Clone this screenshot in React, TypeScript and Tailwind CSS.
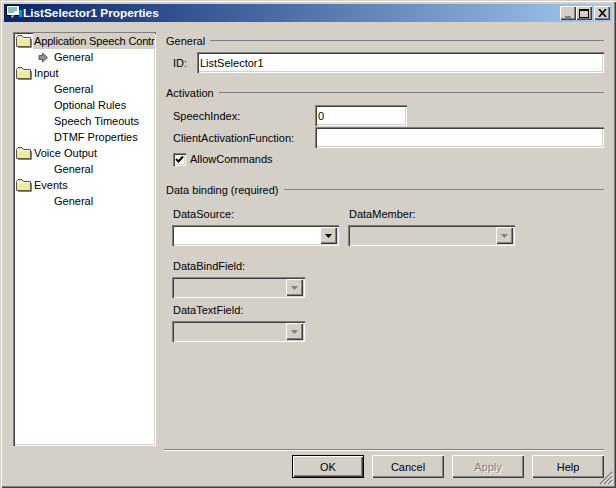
import React from 'react';

const sunken = 'shadow-[inset_1px_1px_0_#808080,inset_2px_2px_0_#404040,inset_-1px_-1px_0_#ffffff,inset_-2px_-2px_0_#d4d0c8]';
const raised = 'shadow-[inset_1px_1px_0_#ffffff,inset_-1px_-1px_0_#404040,inset_-2px_-2px_0_#808080]';

const treeItems = [
  { label: 'Application Speech Contr', folder: true, selected: true },
  { label: 'General', arrow: true },
  { label: 'Input', folder: true },
  { label: 'General' },
  { label: 'Optional Rules' },
  { label: 'Speech Timeouts' },
  { label: 'DTMF Properties' },
  { label: 'Voice Output', folder: true },
  { label: 'General' },
  { label: 'Events', folder: true },
  { label: 'General' },
];

const FolderIcon = () => (
  <svg width="17" height="14" viewBox="0 0 17 14" className="shrink-0">
    <path d="M0.5 12.5V3.5L2 1.5H6L7.5 3.5H14.5V12.5Z" fill="#f2ea8c" stroke="#555" />
    <path d="M1 4.5H14" stroke="#fff" />
    <path d="M15.5 5V13.5H2" fill="none" stroke="#808080" />
  </svg>
);

const ArrowIcon = () => (
  <svg width="10" height="11" viewBox="0 0 10 11" className="shrink-0">
    <path d="M4.5 1L9.5 5.5L4.5 10V7.5H1V3.5H4.5Z" fill="#909090" stroke="#404040" strokeWidth="0.8" />
  </svg>
);

const TitleIcon = () => (
  <svg width="16" height="16" viewBox="0 0 16 16" className="shrink-0">
    <rect x="0.5" y="0.5" width="13" height="10" fill="#fff" stroke="#000" />
    <path d="M2 3H11M2 5H11M2 7H8" stroke="#008080" />
    <path d="M5 10.5V14.5L9 10.5" fill="#fff" stroke="#000" />
    <rect x="13" y="5" width="3" height="7" fill="#00a0c0" />
  </svg>
);

const SectionHeader = ({ title }: { title: string }) => (
  <div className="flex items-center gap-[5px] h-4 pl-[2px]">
    <span>{title}</span>
    <div className="flex-1 h-[2px] border-t border-[#808080] border-b-white" />
  </div>
);

const ComboBox = ({ width, disabled }: { width: string; disabled?: boolean }) => (
  <div className={`${width} h-[21px] flex justify-end p-[2px] ${disabled ? 'bg-[#d4d0c8]' : 'bg-white'} ${sunken}`}>
    <div className={`w-[17px] h-[17px] bg-[#d4d0c8] flex items-center justify-center ${raised}`}>
      <svg width="7" height="4" viewBox="0 0 7 4">
        <path d="M0 0H7L3.5 4Z" fill={disabled ? '#808080' : '#000'} />
      </svg>
    </div>
  </div>
);

const Btn = ({ label, disabled, primary }: { label: string; disabled?: boolean; primary?: boolean }) => (
  <div className={`w-[72px] h-[23px] flex items-center justify-center ${primary ? 'border border-black' : ''} ${raised} ${disabled ? 'text-[#808080] [text-shadow:1px_1px_0_#fff]' : ''}`}>
    {label}
  </div>
);

const WinBtn = ({ children, className = '' }: { children: React.ReactNode; className?: string }) => (
  <div className={`w-4 h-[14px] bg-[#d4d0c8] flex items-center justify-center ${raised} ${className}`}>{children}</div>
);

export default function App() {
  return (
    <div className="relative w-[616px] h-[488px] p-[4px] flex flex-col bg-[#d4d0c8] text-black text-[11px] leading-4 overflow-hidden shadow-[inset_1px_1px_0_#d4d0c8,inset_2px_2px_0_#ffffff,inset_-1px_-1px_0_#404040,inset_-2px_-2px_0_#808080]" style={{ fontFamily: '"Liberation Sans", sans-serif' }}>
      <div className="h-[18px] shrink-0 flex items-center pl-[2px] pr-[2px] bg-gradient-to-r from-[#0a246a] to-[#a6caf0]">
        <TitleIcon />
        <span className="ml-px text-white font-bold text-[11.8px]">ListSelector1 Properties</span>
        <div className="ml-auto flex">
          <WinBtn><div className="w-[6px] h-[2px] bg-[#808080] mt-[7px] mr-[1px]" /></WinBtn>
          <WinBtn><div className="w-[10px] h-[9px] border border-black border-t-2" /></WinBtn>
          <WinBtn className="ml-[2px]">
            <svg width="9" height="8" viewBox="0 0 9 8"><path d="M1 0L8 8M8 0L1 8" stroke="#000" strokeWidth="1.6" /></svg>
          </WinBtn>
        </div>
      </div>

      <div className="flex-1 flex pt-[10px] pl-[9px] pr-[8px]">
        <div className={`w-[143px] h-[414px] bg-white px-[2px] pt-px overflow-hidden ${sunken}`}>
          {treeItems.map((item, i) => (
            <div key={i} className="h-4 flex items-center whitespace-nowrap">
              <div className="w-[18px] shrink-0 flex justify-end">{item.folder && <FolderIcon />}</div>
              {item.folder ? (
                <span className={`pl-px flex-1 ${item.selected ? 'bg-[#d4d0c8] tracking-[-0.15px]' : ''}`}>{item.label}</span>
              ) : (
                <>
                  <div className="w-[19px] shrink-0 flex justify-center">{item.arrow && <ArrowIcon />}</div>
                  <span className="ml-[2px]">{item.label}</span>
                </>
              )}
            </div>
          ))}
        </div>

        <div className="flex-1 ml-2 pt-px flex flex-col">
          <SectionHeader title="General" />
          <div className="flex items-center ml-[9px] mt-[3px]">
            <span className="w-6">ID:</span>
            <div className={`flex-1 h-[21px] bg-white px-[3px] flex items-center ${sunken}`}>ListSelector1</div>
          </div>

          <div className="mt-3"><SectionHeader title="Activation" /></div>
          <div className="flex items-center ml-[9px] mt-[4px]">
            <span className="w-[142px]">SpeechIndex:</span>
            <div className={`w-[92px] h-[21px] bg-white px-[3px] flex items-center ${sunken}`}>0</div>
          </div>
          <div className="flex items-center ml-[9px] mt-px">
            <span className="w-[142px] whitespace-nowrap">ClientActivationFunction:</span>
            <div className={`flex-1 h-[21px] ${sunken} bg-white`} />
          </div>
          <div className="flex items-center ml-[9px] mt-[3px]">
            <div className={`w-[13px] h-[13px] bg-white flex items-center justify-center ${sunken}`}>
              <svg width="9" height="9" viewBox="0 0 9 9"><path d="M1 4L3.5 6.5L8 1.5" fill="none" stroke="#000" strokeWidth="2" /></svg>
            </div>
            <span className="ml-[4px]">AllowCommands</span>
          </div>

          <div className="mt-[15px]"><SectionHeader title="Data binding (required)" /></div>
          <div className="ml-2 mt-2 flex gap-[9px]">
            <div>
              <div className="h-4 pl-px">DataSource:</div>
              <div className="mt-[3px]"><ComboBox width="w-[167px]" /></div>
            </div>
            <div>
              <div className="h-4 pl-px">DataMember:</div>
              <div className="mt-[3px]"><ComboBox width="w-[167px]" disabled /></div>
            </div>
          </div>
          <div className="ml-2 mt-3">
            <div className="h-4 pl-px">DataBindField:</div>
            <div className="mt-[3px]"><ComboBox width="w-[133px]" disabled /></div>
          </div>
          <div className="ml-2 mt-[4px]">
            <div className="h-4 pl-px">DataTextField:</div>
            <div className="mt-[3px]"><ComboBox width="w-[133px]" disabled /></div>
          </div>
        </div>
      </div>

      <div className="h-[35px] shrink-0 mt-[3px] ml-[160px] mr-[8px] border-t border-[#808080] shadow-[inset_0_1px_0_#ffffff] flex justify-end items-start gap-2 pt-[5px]">
        <Btn label="OK" primary />
        <Btn label="Cancel" />
        <Btn label="Apply" disabled />
        <Btn label="Help" />
      </div>

      <svg width="14" height="14" viewBox="0 0 14 14" className="absolute right-[3px] bottom-[3px]">
        <path d="M13 1L1 13M13 5L5 13M13 9L9 13" stroke="#808080" strokeWidth="1.4" />
        <path d="M13 3L3 13M13 7L7 13M13 11L11 13" stroke="#ffffff" />
      </svg>
    </div>
  );
}
